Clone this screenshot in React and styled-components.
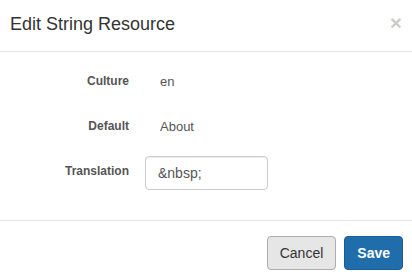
import React from 'react'
import styled, { createGlobalStyle } from 'styled-components'

const GlobalStyle = createGlobalStyle`
  html, body {
    margin: 0;
    padding: 0;
    background: #fff;
  }

  body {
    font-family: "Liberation Sans", Arial, sans-serif;
    color: #333;
  }
`

const fields = [
  { label: 'Culture', value: 'en' },
  { label: 'Default', value: 'About' },
]

export default function App() {
  return (
    <>
      <GlobalStyle />
      <Modal>
        <Header>
          <Title>Edit String Resource</Title>
          <Close type="button" aria-label="Close">×</Close>
        </Header>
        <Body>
          {fields.map((field) => (
            <Row key={field.label}>
              <Label>{field.label}</Label>
              <Static>{field.value}</Static>
            </Row>
          ))}
          <Row>
            <Label>Translation</Label>
            <Input defaultValue={'&nbsp;'} />
          </Row>
        </Body>
        <Footer>
          <Button type="button">Cancel</Button>
          <Button type="button" primary>Save</Button>
        </Footer>
      </Modal>
    </>
  )
}

const Modal = styled.div`
  width: 412px;
  height: 279px;
  display: flex;
  flex-direction: column;
  background: #fff;
  overflow: hidden;
`

const Header = styled.div`
  display: flex;
  justify-content: space-between;
  align-items: flex-start;
  padding: 11px 10px 14px 10px;
  border-bottom: 1px solid #e5e5e5;
`

const Title = styled.h4`
  margin: 0;
  font-size: 18px;
  font-weight: 400;
  line-height: 26px;
  color: #333;
`

const Close = styled.button`
  background: none;
  border: none;
  padding: 0;
  margin: 1px 0 0 0;
  font-family: inherit;
  font-size: 21px;
  font-weight: 700;
  line-height: 21px;
  color: #000;
  opacity: 0.2;
  cursor: pointer;
`

const Body = styled.div`
  display: flex;
  flex-direction: column;
  gap: 11px;
  padding: 14px 0 30px 0;
  border-bottom: 1px solid #e5e5e5;
`

const Row = styled.div`
  display: flex;
  align-items: flex-start;
  gap: 16px;
  height: 34px;
`

const Label = styled.label`
  width: 129px;
  flex-shrink: 0;
  padding-top: 7px;
  text-align: right;
  font-size: 12px;
  font-weight: 700;
  line-height: 17px;
  color: #555;
`

const Static = styled.div`
  padding: 7px 0 0 15px;
  font-size: 13px;
  line-height: 17px;
  color: #555;
`

const Input = styled.input`
  box-sizing: border-box;
  width: 123px;
  height: 34px;
  padding: 6px 12px;
  font-family: inherit;
  font-size: 14px;
  color: #555;
  background: #fff;
  border: 1px solid #ccc;
  border-radius: 4px;
  box-shadow: inset 0 1px 1px rgba(0, 0, 0, 0.075);
  outline: none;
`

const Footer = styled.div`
  display: flex;
  justify-content: flex-end;
  gap: 8px;
  padding: 15px 9px 0 0;
`

const Button = styled.button`
  box-sizing: border-box;
  height: 34px;
  padding: 6px 12px;
  font-family: inherit;
  font-size: 14px;
  line-height: 20px;
  font-weight: ${(p) => (p.primary ? 700 : 400)};
  color: ${(p) => (p.primary ? '#fff' : '#333')};
  background: ${(p) => (p.primary ? '#1f6dab' : '#e6e6e6')};
  border: 1px solid ${(p) => (p.primary ? '#1a5e95' : '#adadad')};
  border-radius: 4px;
  cursor: pointer;
`
